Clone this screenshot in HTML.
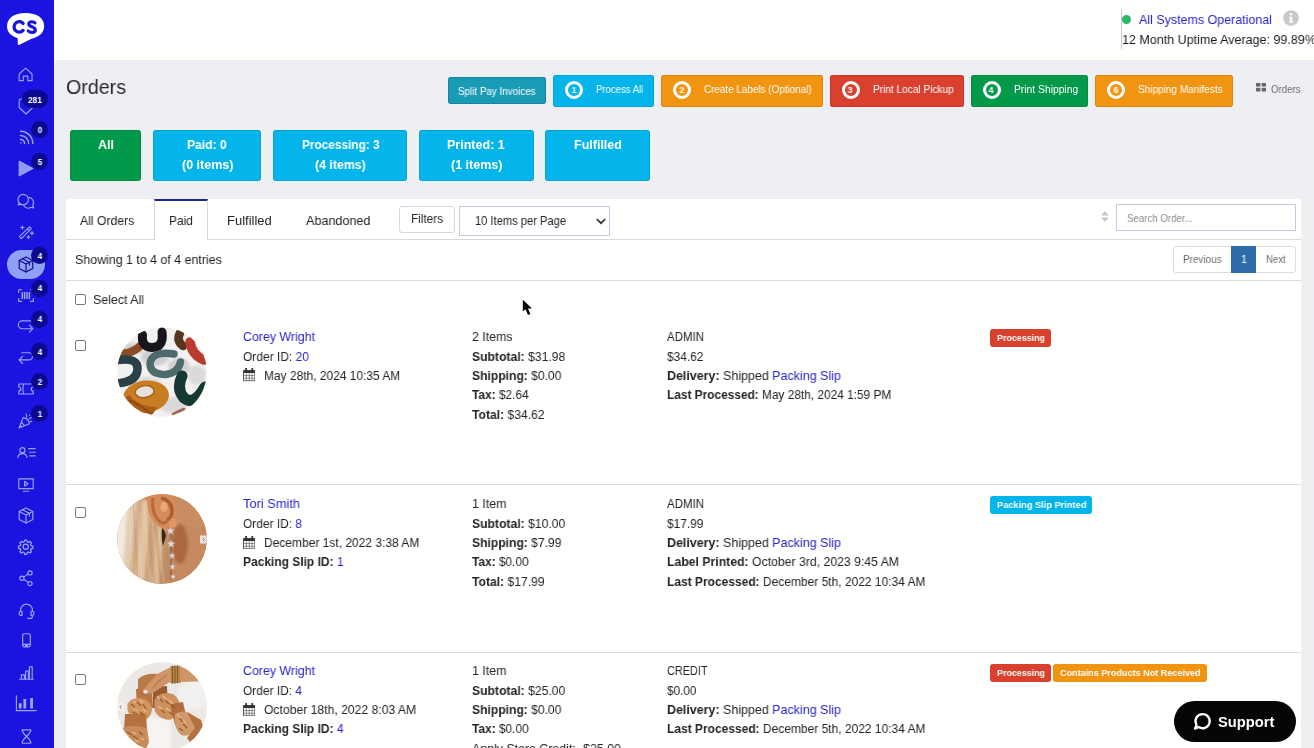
<!DOCTYPE html>
<html>
<head>
<meta charset="utf-8">
<title>Orders</title>
<style>
*{box-sizing:border-box;margin:0;padding:0}
html,body{width:1314px;height:748px;overflow:hidden;background:#fffffd}
body{font-family:"Liberation Sans",sans-serif;font-size:13px;color:#242424;position:relative}
a,.lk{color:#2b24d0;text-decoration:none}
.a{position:absolute}
#sidebar{position:absolute;left:0;top:0;width:54px;height:748px;background:#1b13e0}
#main{position:absolute;left:54.4px;top:60px;width:1260px;height:688px;background:#edeff3;border-top-left-radius:4px}
#panel{position:absolute;left:66px;top:199px;width:1234.5px;height:560px;background:#fffffd;border-radius:3px 3px 0 0}
.t{position:absolute;white-space:nowrap;will-change:transform}
.t b{font-weight:bold}
.hl{position:absolute;height:1px;background:#dbdbdb}
.btn{position:absolute;border-radius:2.2px}
.ring{position:absolute;width:18.6px;height:18.6px;border:3px solid #fff;border-radius:50%;top:4.9px;left:10.6px}
.card{position:absolute;top:130px;height:51px;border-radius:2.5px;background:#03b5ea;border:1px solid #04a3d6}
.cb{position:absolute;width:11px;height:11px;border:1px solid #767676;border-radius:2px;background:#fff}
.badge{position:absolute;height:18px;border-radius:3px}
.sb{position:absolute;background:#0b098f;border-radius:9px;height:17px}
.ic{position:absolute;overflow:visible}
.ic *{fill:none;stroke:#99a5f8;stroke-width:1.15;stroke-linecap:round;stroke-linejoin:round}
</style>
</head>
<body>
<div id="main"></div>
<div id="sidebar"></div>
<div id="panel"></div>

<svg class="a" style="left:5px;top:10px" width="42" height="38" viewBox="5 10 42 38"><path d="M25.55 12.9C37.02 12.9 44.1 17.88 44.1 26.0C44.1 34.12 37.02 39.1 25.55 39.1C14.08 39.1 7.0 34.12 7.0 26.0C7.0 17.88 14.08 12.9 25.55 12.9Z" fill="#fff"/><path d="M17.500 35L17.800 43.800Q17.900 45.400 19.500 44.700L33.500 37.800Z" fill="#fff"/><path d="M23.100 23.400A5.200 5.200 0 1 0 23.100 30.400" fill="none" stroke="#1b13e0" stroke-width="3.300" stroke-linecap="round"/><path d="M35 22.900C33.300 21.200 28.800 21.200 28.800 24C28.800 27.300 35.300 26.300 35.300 29.900C35.300 33 30.200 33 28.300 31" fill="none" stroke="#1b13e0" stroke-width="3.200" stroke-linecap="round"/></svg>
<div class="a" style="left:7px;top:249.5px;width:38px;height:29px;border-radius:14.5px;background:#8fa1f5"></div>
<!-- home -->
<svg class="ic" style="left:18.4px;top:67.3px" width="15.2" height="15.2" viewBox="0 0 16 16"><path d="M1.2 7.4L8 1.2L14.8 7.4V14.4H10.4V9.6H5.6V14.4H1.2Z"/></svg>
<!-- tag -->
<svg class="ic" style="left:18px;top:98px" width="16" height="17" viewBox="0 0 16 17"><path d="M1.2 2.5Q1.2 1 2.7 1H13.3Q14.8 1 14.8 2.5V9.5L8 16L1.2 9.5Z"/></svg>
<!-- rss -->
<svg class="ic" style="left:19px;top:130px" width="15" height="15" viewBox="0 0 15 15"><path d="M1.5 1.2A12.3 12.3 0 0 1 13.8 13.5M1.5 5.4A8.1 8.1 0 0 1 9.6 13.5M1.5 9.4A4.1 4.1 0 0 1 5.6 13.5" style="stroke-width:1.5"/><circle cx="2" cy="13" r=".8" style="fill:#99a5f8;stroke:none"/></svg>
<!-- play -->
<svg class="ic" style="left:18px;top:160px" width="16" height="17" viewBox="0 0 16 17"><path d="M1.2 1.2L14.8 8.5L1.2 15.8Z" style="fill:#8e9bf4;stroke:#99a5f8"/></svg>
<!-- chat -->
<svg class="ic" style="left:16px;top:192px" width="20" height="18" viewBox="16 192 20 18"><circle cx="23.200" cy="199.600" r="5.200"/><path d="M19.300 203.100L18 204.900L21.200 204.400"/><path d="M28.900 197.400A5.300 5.300 0 0 1 32.700 205.600L33.800 208L31 207.300A5.300 5.300 0 0 1 23.900 205.900"/></svg>
<!-- wand -->
<svg class="ic" style="left:18px;top:224px" width="16" height="16" viewBox="0 0 16 16"><path d="M1.500 12.700L11.400 2.800L13.300 4.700L3.400 14.600ZM9.300 4.900L11.200 6.800"/><path d="M4.400 1.900V5.100M2.800 3.500H6M14 7.500V10.700M12.400 9.100H15.600M10.400 11.800V14.400M9.100 13.100H11.700" style="stroke-width:1.200"/></svg>
<!-- box active -->
<svg class="ic" style="left:18px;top:256px" width="16" height="17" viewBox="0 0 16 17"><g style="stroke:#0b098f"><path d="M8 1L14.8 4.4V12.4L8 16L1.2 12.4V4.4Z" style="stroke:#0b098f"/><path d="M1.2 4.4L8 7.9L14.8 4.4M8 7.9V16M4.5 2.7L11.4 6.2V9" style="stroke:#0b098f"/></g></svg>
<!-- barcode -->
<svg class="ic" style="left:17.5px;top:288.5px" width="16" height="13" viewBox="0 0 16 13"><path d="M.7 3.4V.7H3.6M12.4 .7H15.3V3.4M15.3 9.6V12.3H12.4M3.6 12.3H.7V9.6"/><path d="M4.3 3.6V9.4M6.6 3.6V9.4M9 3.6V9.4M11.4 3.6V9.4" style="stroke-width:1.5"/></svg>
<!-- turn right -->
<svg class="ic" style="left:17px;top:318px" width="18" height="16" viewBox="17 318 18 16"><path d="M30.500 320.900H22.200A3.900 3.900 0 0 0 22.200 328.700H32.600M29.400 325.200L32.900 328.700L29.400 332.200"/></svg>
<!-- turn left -->
<svg class="ic" style="left:17px;top:350px" width="18" height="16" viewBox="17 350 18 16"><path d="M21.800 352.700H29A3.600 3.600 0 0 1 29 359.900H19.200M22.600 356.400L19 359.900L22.600 363.500"/></svg>
<!-- ticket -->
<svg class="ic" style="left:17.5px;top:382.8px" width="16" height="12" viewBox="0 0 16 12"><path d="M.8 1H15.2V4A2 2 0 0 0 15.2 8V11H.8V8A2 2 0 0 0 .8 4ZM5.4 1Q4.4 6 5.4 11"/></svg>
<!-- party -->
<svg class="ic" style="left:18px;top:412.5px" width="15" height="16" viewBox="0 0 15 16"><path d="M5.2 4.6L1 15L11.4 10.8A7.4 7.4 0 0 0 5.2 4.6ZM3.4 9.4L6.6 12.6M2.2 12.2L3.8 13.8"/><path d="M8.6 4.2Q9 2.4 8 1M11 6Q12.2 4.6 13.8 4.8M12.2 8.4L13.6 8.6M11.6 2.2L11.7 2.3" style="stroke-width:1.1"/></svg>
<!-- user list -->
<svg class="ic" style="left:17px;top:447px" width="19" height="11" viewBox="0 0 19 11"><circle cx="5.4" cy="3.2" r="2.6"/><path d="M.8 10.4A4.7 4.7 0 0 1 10 10.4M11.6 1.6H18.2M12.6 5.2H18.2M12.6 8.8H18.2"/></svg>
<!-- monitor -->
<svg class="ic" style="left:18px;top:477.5px" width="16" height="14" viewBox="0 0 16 14"><path d="M.8 .8H15.2V10.6H.8ZM5.4 13.2H10.6M6.6 3.4L10 5.7L6.6 8Z"/></svg>
<!-- box -->
<svg class="ic" style="left:17.5px;top:507px" width="16" height="17" viewBox="0 0 16 17"><path d="M8 1L14.8 4.4V12.4L8 16L1.2 12.4V4.4Z"/><path d="M1.2 4.4L8 7.9L14.8 4.4M8 7.9V16M4.5 2.7L11.4 6.2V9"/></svg>
<!-- gear -->
<svg class="ic" style="left:18.200px;top:538.800px" width="15.400" height="15.400" viewBox="0 0 24 24"><path d="M10.3 1.6h3.4l.6 2.9 1.9.8 2.5-1.6 2.4 2.4-1.6 2.5.8 1.9 2.9.6v3.4l-2.9.6-.8 1.9 1.6 2.5-2.4 2.4-2.5-1.6-1.9.8-.6 2.9h-3.4l-.6-2.9-1.9-.8-2.5 1.6-2.4-2.4 1.6-2.5-.8-1.9-2.9-.6v-3.4l2.9-.6.8-1.9-1.6-2.5 2.4-2.4 2.5 1.6 1.9-.8z" style="stroke-width:2"/><circle cx="12" cy="12" r="4" style="stroke-width:2"/></svg>
<!-- share -->
<svg class="ic" style="left:18.5px;top:570px" width="14" height="16.5" viewBox="0 0 14 16.5"><circle cx="11" cy="2.9" r="2.1"/><circle cx="2.9" cy="8.2" r="2.1"/><circle cx="11" cy="13.6" r="2.1"/><path d="M4.7 7.1L9.2 4M4.7 9.3L9.2 12.4"/></svg>
<!-- headset -->
<svg class="ic" style="left:17.5px;top:602.5px" width="17" height="16.5" viewBox="0 0 17 16.5"><path d="M2.6 8.4V7A5.9 5.9 0 0 1 14.4 7V8.4"/><path d="M4 8.2H2.8A1.6 1.6 0 0 0 1.2 9.8V10.8A1.6 1.6 0 0 0 2.8 12.4H4ZM13 8.2H14.2A1.6 1.6 0 0 1 15.8 9.8V10.8A1.6 1.6 0 0 1 14.2 12.4H13ZM14.4 12.4V13.4Q14.4 15.4 12.4 15.4H9.6"/></svg>
<!-- phone -->
<svg class="ic" style="left:21.5px;top:633px" width="9" height="14.5" viewBox="0 0 9 14.5"><path d="M2.2 .7H6.8Q8.3 .7 8.3 2.2V12.3Q8.3 13.8 6.8 13.8H2.2Q.7 13.8 .7 12.3V2.2Q.7 .7 2.2 .7ZM.7 11.4H8.3M3.6 12.6H5.4"/></svg>
<!-- bars -->
<svg class="ic" style="left:18.5px;top:665.5px" width="15" height="14" viewBox="0 0 15 14"><path d="M.6 13.2H14.4M2.4 13.2V8.8H5.4V13.2M6.6 13.2V5H9.4V13.2M10.4 13.2V.8H13.2V13.2"/></svg>
<!-- chart -->
<svg class="ic" style="left:15px;top:695px" width="22" height="16.5" viewBox="0 0 22 16.5"><path d="M1.4 .7V15.6H21.2"/><path d="M5.2 13.6V8.2M9.8 13.6V4M16.6 13.6V3" style="stroke-width:2.8;stroke-linecap:butt"/></svg>
<!-- hourglass -->
<svg class="ic" style="left:20.5px;top:728.5px" width="11" height="15" viewBox="0 0 11 15"><path d="M1.6 .8H9.4Q10.2 .8 9.8 1.8Q8.8 4.8 5.5 7.5Q2.2 4.8 1.2 1.8Q.8 .8 1.6 .8ZM1.6 14.2H9.4Q10.2 14.2 9.8 13.2Q8.8 10.2 5.5 7.5Q2.2 10.2 1.2 13.2Q.8 14.2 1.6 14.2Z"/></svg>
<!-- badges -->
<div class="sb" style="left:22.2px;top:90px;width:25.6px;height:18px"></div>
<div class="sb" style="left:31px;top:121px;width:17px"></div>
<div class="sb" style="left:31px;top:153px;width:17px"></div>
<div class="sb" style="left:31px;top:247.3px;width:17px"></div>
<div class="sb" style="left:31px;top:279.5px;width:17px"></div>
<div class="sb" style="left:31px;top:310.5px;width:17px"></div>
<div class="sb" style="left:31px;top:342.7px;width:17px"></div>
<div class="sb" style="left:31px;top:373.2px;width:17px"></div>
<div class="sb" style="left:31px;top:405.4px;width:17px"></div>

<div class="a" style="left:1121px;top:9px;width:1px;height:40px;background:#c9cce0"></div>
<div class="a" style="left:1121.6px;top:14.600px;width:9.800px;height:9.800px;border-radius:50%;background:#2db76b"></div>
<svg class="a" style="left:1283px;top:9.5px" width="16" height="16" viewBox="0 0 16 16"><circle cx="8" cy="8" r="7.8" fill="#c9c9c9"/><circle cx="8" cy="4.3" r="1.25" fill="#fff"/><path d="M6.3 6.7h2.9v4.6h1v1.2H6v-1.2h1V7.9H6.3z" fill="#fff"/></svg>

<div class="btn" style="left:448px;top:77px;width:98px;height:26.5px;background:#1a9bb5;border:1px solid #1b8399"></div>
<div class="btn" style="left:553px;top:75px;width:101px;height:31.5px;background:#03b5ea;border:1px solid #04a3d6"><div class="ring"></div></div>
<div class="btn" style="left:661px;top:75px;width:162px;height:31.5px;background:#f19412;border:1px solid #e0830f"><div class="ring"></div></div>
<div class="btn" style="left:830px;top:75px;width:134px;height:31.5px;background:#d9402e;border:1px solid #c93524"><div class="ring"></div></div>
<div class="btn" style="left:971px;top:75px;width:117px;height:31.5px;background:#029a4a;border:1px solid #028a40"><div class="ring"></div></div>
<div class="btn" style="left:1095px;top:75px;width:138px;height:31.5px;background:#f19412;border:1px solid #e0830f"><div class="ring"></div></div>
<svg class="a" style="left:1255.5px;top:83.3px" width="10" height="8.4" viewBox="0 0 10 8.4"><path d="M0 .6Q0 0 .6 0H3.8Q4.4 0 4.4 .6V3Q4.4 3.6 3.8 3.6H.6Q0 3.6 0 3zM5.6 .6Q5.6 0 6.2 0H9.4Q10 0 10 .6V3Q10 3.6 9.4 3.6H6.2Q5.6 3.6 5.6 3zM0 5.4Q0 4.8 .6 4.8H3.8Q4.4 4.8 4.4 5.4V7.8Q4.4 8.4 3.8 8.4H.6Q0 8.4 0 7.8zM5.6 5.4Q5.6 4.8 6.2 4.8H9.4Q10 4.8 10 5.4V7.8Q10 8.4 9.4 8.4H6.2Q5.6 8.4 5.6 7.8z" fill="#666"/></svg>

<div class="card" style="left:70px;width:71px;background:#029a4a;border-color:#028a40"></div>
<div class="card" style="left:153px;width:108px"></div>
<div class="card" style="left:273px;width:134px"></div>
<div class="card" style="left:419px;width:115px"></div>
<div class="card" style="left:545px;width:105px"></div>

<div class="hl" style="left:66px;top:238.5px;width:1234.5px;background:#d9d9db"></div>
<div class="a" style="left:154px;top:199px;width:54px;height:40.5px;background:#fffffd;border:1px solid #d9d9db;border-bottom:none;border-top:2px solid #1a2a8a"></div>
<div class="a" style="left:399px;top:206px;width:55.5px;height:26.5px;border:1px solid #d9d9d9;border-radius:3px;background:#fffffd"></div>
<div class="a" style="left:459px;top:206px;width:151px;height:29.5px;border:1px solid #c3c9e6;border-radius:0;background:#fffffd"></div>
<svg class="a" style="left:596px;top:218px" width="10" height="7" viewBox="0 0 10 7"><path d="M.8 1L5 5.200L9.200 1" fill="none" stroke="#333" stroke-width="1.700" stroke-linejoin="miter"/></svg>
<svg class="a" style="left:1100.5px;top:211px" width="8" height="11" viewBox="0 0 8 11"><path d="M4 0L7.8 4.4H.2zM4 11L7.8 6.6H.2z" fill="#c3c7d6"/></svg>
<div class="a" style="left:1116px;top:204px;width:180px;height:27px;border:1px solid #c3c9e6;border-radius:0;background:#fffffd"></div>
<div class="hl" style="left:66px;top:280px;width:1234.5px"></div>
<div class="a" style="left:1173px;top:246px;width:123px;height:27px;border:1px solid #dcdcdc;border-radius:3px;background:#fffffd"></div>
<div class="a" style="left:1231px;top:246px;width:25px;height:27px;background:#2d6dab"></div>
<div class="cb" style="left:75px;top:294px"></div>
<svg class="a" style="left:520px;top:298px" width="14" height="19" viewBox="520 298 14 19"><path d="M522.800 299.800V311.500L525.500 309.200L528 315L530.400 314L528 308.500H532Z" fill="#050505" stroke="#fff" stroke-width="1.200" stroke-linejoin="round" paint-order="stroke"/></svg>

<div class="hl" style="left:66px;top:484px;width:1234.5px"></div>
<div class="hl" style="left:66px;top:652px;width:1234.5px"></div>
<div class="cb" style="left:75px;top:340px"></div>
<div class="cb" style="left:75px;top:507px"></div>
<div class="cb" style="left:75px;top:674px"></div>
<svg width="0" height="0" style="position:absolute"><defs>
<clipPath id="cc"><circle cx="45" cy="45" r="44.8"/></clipPath>
<filter id="b1" x="-20%" y="-20%" width="140%" height="140%"><feGaussianBlur stdDeviation="0.7"/></filter>
<filter id="b2" x="-20%" y="-20%" width="140%" height="140%"><feGaussianBlur stdDeviation="1.6"/></filter>
<filter id="b3" x="-20%" y="-20%" width="140%" height="140%"><feGaussianBlur stdDeviation="3"/></filter>
<symbol id="cal" viewBox="0 0 13 14"><path d="M.5 2.600h12v10.900H.5z" fill="none" stroke="#333" stroke-width=".9"/><path d="M.5 7.900h12M.5 10.700h12M3.500 5.200v8.300M6.500 5.200v8.300M9.500 5.200v8.300" stroke="#333" stroke-width=".55" fill="none"/><path d="M.5 2.600h12v2.700H.5z" fill="#333"/><path d="M3.300.7v2.600M9.700.7v2.600" stroke="#333" stroke-width="1.900" stroke-linecap="round"/></symbol>
</defs></svg>
<svg class="a" style="left:243px;top:368.3px" width="12.4" height="13.4"><use href="#cal"/></svg>
<svg class="a" style="left:243px;top:535.5px" width="12.4" height="13.4"><use href="#cal"/></svg>
<svg class="a" style="left:243px;top:702.5px" width="12.4" height="13.4"><use href="#cal"/></svg>
<svg class="a" style="left:117.2px;top:327.2px" width="90" height="90" viewBox="0 0 90 90"><g clip-path="url(#cc)"><rect width="90" height="90" fill="#f3f1ef"/>
<g filter="url(#b2)"><ellipse cx="38" cy="30" rx="14" ry="9" fill="#cfcfd2"/><ellipse cx="62" cy="40" rx="11" ry="9" fill="#d0d0d4"/><ellipse cx="14" cy="22" rx="12" ry="6" fill="#d0cfd1"/><ellipse cx="56" cy="78" rx="14" ry="8" fill="#d9d8da"/><ellipse cx="30" cy="55" rx="14" ry="5" fill="#dcdbdc"/><ellipse cx="80" cy="48" rx="9" ry="10" fill="#dadadc"/></g>
<g filter="url(#b1)" fill="none" stroke-linecap="round">
<path d="M5 26.500Q15 27 25 17.500" stroke="#8b4b26" stroke-width="8"/>
<path d="M25.500 8Q24 20 35 20.500Q47 20.500 45 5" stroke="#15141d" stroke-width="9"/>
<path d="M63 6Q59 14 66 19" stroke="#54361c" stroke-width="8.500"/>
<path d="M73 15Q75 28 87 33" stroke="#b93b2d" stroke-width="9.500"/>
<path d="M57 27Q35 23.500 33 36.500Q33 47.500 49 47.500Q61 46 63.500 35" stroke="#4e6b6c" stroke-width="7.500"/>
<path d="M1 33Q21 30 20.500 42Q20 54 3 56" stroke="#2c4147" stroke-width="8.500"/>
<path d="M65 49Q59 62 67 71Q77 79 88 60" stroke="#183932" stroke-width="11"/>
<ellipse cx="29" cy="69.500" rx="23" ry="16" fill="#c97d20" stroke="none" transform="rotate(-6 29 69.500)"/>
<path d="M7 72Q14 86 36 87L40 80Q22 80 12 68Z" fill="#a95c17" stroke="none"/>
<path d="M12 73Q24 78 34 87" stroke="#8a4614" stroke-width="1.600"/>
<ellipse cx="27.600" cy="64.600" rx="9.500" ry="6" fill="#e6e1dc" stroke="#a8641c" stroke-width="1.500" transform="rotate(-8 27.600 64.600)"/>
<path d="M56 87Q62 84 67 82" stroke="#a4604a" stroke-width="2.500"/>
</g></g></svg>
<svg class="a" style="left:117.200px;top:494.300px" width="90" height="90" viewBox="0 0 90 90"><g clip-path="url(#cc)"><rect width="90" height="90" fill="#c48658"/>
<g filter="url(#b2)">
<rect x="56" y="0" width="40" height="34" fill="#c98d62"/>
<ellipse cx="74" cy="62" rx="22" ry="30" fill="#c68a60"/>
<ellipse cx="63" cy="50" rx="8" ry="20" fill="#ac683c"/>
<rect x="-4" y="0" width="14" height="90" fill="#f3ebe2"/>
<rect x="8" y="0" width="9" height="90" fill="#e3ccb2" transform="rotate(4 13 45)"/>
<rect x="16" y="0" width="7" height="90" fill="#cfa985" transform="rotate(5 20 45)"/>
<rect x="22" y="6" width="9" height="90" fill="#e2c4a2" transform="rotate(5 27 45)"/>
<rect x="30.500" y="20" width="7" height="80" fill="#c9a07a" transform="rotate(5 35 55)"/>
<rect x="37" y="30" width="8" height="70" fill="#d9b590" transform="rotate(5 42 60)"/>
<rect x="45" y="42" width="6" height="60" fill="#bd9068" transform="rotate(4 49 65)"/>
</g>
<g stroke-width=".6" fill="none" opacity=".55"><path d="M12 10Q14 50 16 88M20 6Q23 50 25 90M27 12Q30 52 33 90M35 26Q38 60 41 90M42 36Q44 64 47 90" stroke="#f1e2cf"/><path d="M16 8Q19 50 21 90M31 18Q34 56 37 90M39 32Q41 62 44 90" stroke="#a97f58"/></g>
<g filter="url(#b1)">
<path d="M30 2Q29 22 40 31Q48 38 55 33Q62 28 60 14Q58 2 50 -2H32Z" fill="#d78b59"/>
<path d="M36 4Q34 18 42 27Q47 31 50 27" fill="none" stroke="#b56a3d" stroke-width="3"/>
<path d="M44 4Q54 6 55 16Q55 24 50 26" fill="none" stroke="#a95f35" stroke-width="3.500"/>
<ellipse cx="47" cy="13" rx="3.500" ry="5" fill="#e9a677"/>
<ellipse cx="56" cy="29" rx="4" ry="4.500" fill="#dd9566"/>
<path d="M45 34Q48 36 49 42L46 52Q44 44 45 34Z" fill="#3b2619"/>
<path d="M54 34V86" stroke="#8a6248" stroke-width="1.200"/>
</g>
<g filter="url(#b1)" fill="#ddd2d4" stroke="#a58570" stroke-width=".4">
<path transform="translate(53.500 36.500) scale(.8)" d="M0-5l1.600 3.400 3.800.4-2.800 2.600.8 3.800-3.400-2-3.400 2 .8-3.800-2.800-2.600 3.800-.4z"/>
<path transform="translate(54 49.500) scale(.8)" d="M0-5l1.600 3.400 3.800.4-2.800 2.600.8 3.800-3.400-2-3.400 2 .8-3.800-2.800-2.600 3.800-.4z"/>
<path transform="translate(55 61.500) scale(.62)" d="M0-5l1.600 3.400 3.800.4-2.800 2.600.8 3.800-3.400-2-3.400 2 .8-3.800-2.800-2.600 3.800-.4z"/>
<path transform="translate(55.500 72.500) scale(.62)" d="M0-5l1.600 3.400 3.800.4-2.800 2.600.8 3.800-3.400-2-3.400 2 .8-3.800-2.800-2.600 3.800-.4z"/>
<path transform="translate(56 82.500) scale(.55)" d="M0-5l1.600 3.400 3.800.4-2.800 2.600.8 3.800-3.400-2-3.400 2 .8-3.800-2.800-2.600 3.800-.4z"/>
</g>
<rect x="83" y="41.500" width="7" height="8" fill="#ebe1da"/><path d="M85.800 43.800L87.500 45.500L85.800 47.200" fill="none" stroke="#777" stroke-width=".8"/>
</g></svg>
<svg class="a" style="left:117.400px;top:661.800px" width="90" height="90" viewBox="0 0 90 90"><g clip-path="url(#cc)"><rect width="90" height="90" fill="#ebe8e6"/>
<g filter="url(#b2)"><ellipse cx="76" cy="34" rx="16" ry="14" fill="#f3f1f0"/><path d="M31 55L53 58L54 92H28Z" fill="#f6f4f2"/></g>
<g filter="url(#b1)">
<path d="M21 17Q28 11 40 12L44 26L34 30L21 27Z" fill="#b97a4a"/>
<path d="M19 27L35 26L36 46L20 45Z" fill="#b87443"/>
<path d="M36 25L50 24L51 46L36 46Z" fill="#9a5a32"/>
<ellipse cx="43.500" cy="45" rx="3.500" ry="3" fill="#5f3422"/>
<path d="M90 5L63 4L54 5L40 12L26 28L27 31.500L35 31.500L52 20.500L63 20L90 19Z" fill="#cf9468"/>
<path d="M50 13Q42 18 36 26" fill="none" stroke="#bb8258" stroke-width="1.500"/>
<path d="M53.500 4L63 3.500L63.500 21L54 21.500Z" fill="#b8864a"/><path d="M55.500 4V21.500M58 3.800V21.300M60.500 3.600V21" stroke="#7e5428" stroke-width="1"/>
<path d="M10.500 42Q14 35 24 36Q34 38 35 48Q34 58 24 58Q12 56 10.500 48Z" fill="#d1965f"/>
<path d="M37.500 38Q42 30 52 31Q62 33 63 44Q62 56 52 58Q40 56 37.500 48Z" fill="#cd915d"/>
<path d="M53 42L66 40L70 58L58 63Z" fill="#b06c3c"/>
<path d="M58 52Q66 47 74 52L79 66Q74 76 64 73Q56 66 58 52Z" fill="#d09a68"/>
<path d="M70 50L84 58L88 72L76 84L70 76L78 66Z" fill="#b4703d"/>
<path d="M8 52L29 52L30 68L7 68Z" fill="#b5713f"/>
<path d="M5 66Q16 62 30 66L32 80L27 92H8Q2 80 5 66Z" fill="#c98d5c"/>
<path d="M14 42l4 3M20 40l4 4M26 42l3 5M15 50l5 2M23 50l4 3M42 36l4 4M48 38l4 4M54 42l4 4M44 48l4 3M52 50l4 3M62 56l4 4M66 62l4 4M62 66l4 3M10 70l5 3M16 74l5 3M12 80l5 3M22 70l4 3M20 82l4 3" stroke="#96582f" stroke-width="1.200" fill="none"/>
<path d="M16 39l3 2M23 38l3 3M17 47l4 2M26 47l3 3M40 34l3 3M46 34l4 4M52 38l4 4M41 44l4 3M49 46l4 3M60 52l4 4M66 58l3 3M8 72l4 2M15 70l4 2M18 78l4 2M24 76l3 2" stroke="#e8b98e" stroke-width="1.300" fill="none"/>
<ellipse cx="28.500" cy="29.800" rx="2.200" ry="1.700" fill="#f4ebe4"/>
</g>
<rect x="0" y="41" width="7.500" height="8" fill="#f4f1ee"/><path d="M4.300 43.300L2.800 45L4.300 46.700" fill="none" stroke="#666" stroke-width=".8"/>
</g></svg>
<div class="badge" style="left:989.5px;top:329px;width:61.5px;background:#d9402e"></div>
<div class="badge" style="left:989.5px;top:496px;width:102.5px;background:#03b5ea"></div>
<div class="badge" style="left:989.5px;top:664px;width:61.5px;background:#d9402e"></div>
<div class="badge" style="left:1052.5px;top:664px;width:154.5px;background:#f19412"></div>

<div class="a" style="left:1174px;top:701px;width:121.7px;height:41px;border-radius:20.5px;background:#050505"></div>
<svg class="a" style="left:1193.3px;top:712.4px" width="19" height="20" viewBox="0 0 19 20"><path d="M9.7 2.2a7 7 0 1 1-3.9 12.8L2 16.6l1.5-3.8A7 7 0 0 1 9.7 2.2z" fill="none" stroke="#fff" stroke-width="2.3" stroke-linejoin="round"/></svg>

<div class="t" style="left:66.00px;top:76.70px;font-size:20.5px;line-height:20px;height:20px;color:#2a2a2a;transform:scaleX(0.9576);transform-origin:0 50%;">Orders</div>
<div class="t" style="left:1138.60px;top:10.12px;font-size:13.5px;line-height:20px;height:20px;color:#2b24d0;transform:scaleX(0.9232);transform-origin:0 50%;">All Systems Operational</div>
<div class="t" style="left:1121.80px;top:30.42px;font-size:13.5px;line-height:20px;height:20px;color:#1c1c1c;transform:scaleX(0.9276);transform-origin:0 50%;">12 Month Uptime Average: 99.89%</div>
<div class="t" style="left:458.40px;top:81.53px;font-size:10.3px;line-height:20px;height:20px;color:#fff;transform:scaleX(0.9547);transform-origin:0 50%;">Split Pay Invoices</div>
<div class="t" style="left:596.30px;top:80.03px;font-size:10.3px;line-height:20px;height:20px;color:#fff;transform:scaleX(0.9286);transform-origin:0 50%;">Process All</div>
<div class="t" style="left:704.40px;top:80.03px;font-size:10.3px;line-height:20px;height:20px;color:#fff;transform:scaleX(0.9591);transform-origin:0 50%;">Create Labels (Optional)</div>
<div class="t" style="left:872.60px;top:80.03px;font-size:10.3px;line-height:20px;height:20px;color:#fff;transform:scaleX(0.9791);transform-origin:0 50%;">Print Local Pickup</div>
<div class="t" style="left:1013.70px;top:80.03px;font-size:10.3px;line-height:20px;height:20px;color:#fff;transform:scaleX(0.9983);transform-origin:0 50%;">Print Shipping</div>
<div class="t" style="left:1138.30px;top:80.03px;font-size:10.3px;line-height:20px;height:20px;color:#fff;transform:scaleX(0.9734);transform-origin:0 50%;">Shipping Manifests</div>
<div class="t" style="left:573.90px;top:80.38px;font-size:9px;line-height:20px;height:20px;transform:translateX(-50%) scaleX(.998);color:#fff;font-weight:bold;">1</div>
<div class="t" style="left:681.80px;top:80.38px;font-size:9px;line-height:20px;height:20px;transform:translateX(-50%) scaleX(.998);color:#fff;font-weight:bold;">2</div>
<div class="t" style="left:850.40px;top:80.38px;font-size:9px;line-height:20px;height:20px;transform:translateX(-50%) scaleX(.998);color:#fff;font-weight:bold;">3</div>
<div class="t" style="left:991.30px;top:80.38px;font-size:9px;line-height:20px;height:20px;transform:translateX(-50%) scaleX(.998);color:#fff;font-weight:bold;">4</div>
<div class="t" style="left:1115.90px;top:80.38px;font-size:9px;line-height:20px;height:20px;transform:translateX(-50%) scaleX(.998);color:#fff;font-weight:bold;">6</div>
<div class="t" style="left:1270.80px;top:79.63px;font-size:10.3px;line-height:20px;height:20px;color:#6d6d6d;transform:scaleX(0.9338);transform-origin:0 50%;">Orders</div>
<div class="t" style="left:105.60px;top:135.27px;font-size:12.5px;line-height:20px;height:20px;transform:translateX(-50%) scaleX(.998);color:#fff;font-weight:bold;">All</div>
<div class="t" style="left:187.40px;top:135.27px;font-size:12.5px;line-height:20px;height:20px;color:#fff;font-weight:bold;transform:scaleX(0.9683);transform-origin:0 50%;">Paid: 0</div>
<div class="t" style="left:181.90px;top:155.27px;font-size:12.5px;line-height:20px;height:20px;color:#fff;font-weight:bold;transform:scaleX(0.9979);transform-origin:0 50%;">(0 items)</div>
<div class="t" style="left:301.60px;top:135.27px;font-size:12.5px;line-height:20px;height:20px;color:#fff;font-weight:bold;transform:scaleX(0.9465);transform-origin:0 50%;">Processing: 3</div>
<div class="t" style="left:314.80px;top:155.27px;font-size:12.5px;line-height:20px;height:20px;color:#fff;font-weight:bold;transform:scaleX(0.9863);transform-origin:0 50%;">(4 items)</div>
<div class="t" style="left:447.10px;top:135.27px;font-size:12.5px;line-height:20px;height:20px;color:#fff;font-weight:bold;transform:scaleX(1.0025);transform-origin:0 50%;">Printed: 1</div>
<div class="t" style="left:450.70px;top:155.27px;font-size:12.5px;line-height:20px;height:20px;color:#fff;font-weight:bold;transform:scaleX(0.9960);transform-origin:0 50%;">(1 items)</div>
<div class="t" style="left:573.70px;top:135.27px;font-size:12.5px;line-height:20px;height:20px;color:#fff;font-weight:bold;transform:scaleX(0.9954);transform-origin:0 50%;">Fulfilled</div>
<div class="t" style="left:80.20px;top:211.30px;font-size:13px;line-height:20px;height:20px;transform:scaleX(0.9395);transform-origin:0 50%;">All Orders</div>
<div class="t" style="left:168.90px;top:211.30px;font-size:13px;line-height:20px;height:20px;transform:scaleX(0.9143);transform-origin:0 50%;">Paid</div>
<div class="t" style="left:227.10px;top:211.30px;font-size:13px;line-height:20px;height:20px;transform:scaleX(0.9889);transform-origin:0 50%;">Fulfilled</div>
<div class="t" style="left:306.00px;top:211.30px;font-size:13px;line-height:20px;height:20px;transform:scaleX(0.9697);transform-origin:0 50%;">Abandoned</div>
<div class="t" style="left:411.20px;top:208.90px;font-size:13px;line-height:20px;height:20px;transform:scaleX(0.9042);transform-origin:0 50%;">Filters</div>
<div class="t" style="left:474.50px;top:211.14px;font-size:12.3px;line-height:20px;height:20px;transform:scaleX(0.9056);transform-origin:0 50%;">10 Items per Page</div>
<div class="t" style="left:1126.60px;top:207.79px;font-size:11px;line-height:20px;height:20px;color:#8c8c8c;transform:scaleX(0.8808);transform-origin:0 50%;">Search Order...</div>
<div class="t" style="left:75.10px;top:250.30px;font-size:13px;line-height:20px;height:20px;transform:scaleX(0.9536);transform-origin:0 50%;">Showing 1 to 4 of 4 entries</div>
<div class="t" style="left:1183.30px;top:249.83px;font-size:10.3px;line-height:20px;height:20px;color:#6a6a6a;transform:scaleX(0.9610);transform-origin:0 50%;">Previous</div>
<div class="t" style="left:1243.50px;top:249.83px;font-size:10.3px;line-height:20px;height:20px;transform:translateX(-50%) scaleX(.998);color:#fff;">1</div>
<div class="t" style="left:1266.00px;top:249.83px;font-size:10.3px;line-height:20px;height:20px;color:#6a6a6a;transform:scaleX(0.9251);transform-origin:0 50%;">Next</div>
<div class="t" style="left:92.60px;top:290.30px;font-size:13px;line-height:20px;height:20px;transform:scaleX(0.9535);transform-origin:0 50%;">Select All</div>
<div class="t" style="left:243.10px;top:327.10px;font-size:13px;line-height:20px;height:20px;color:#2b24d0;transform:scaleX(0.9521);transform-origin:0 50%;">Corey Wright</div>
<div class="t" style="left:243.10px;top:346.70px;font-size:13px;line-height:20px;height:20px;transform:scaleX(0.9225);transform-origin:0 50%;">Order ID: <span class="lk">20</span></div>
<div class="t" style="left:263.80px;top:366.10px;font-size:13px;line-height:20px;height:20px;transform:scaleX(0.9193);transform-origin:0 50%;">May 28th, 2024 10:35 AM</div>
<div class="t" style="left:472.00px;top:327.10px;font-size:13px;line-height:20px;height:20px;transform:scaleX(0.9525);transform-origin:0 50%;">2 Items</div>
<div class="t" style="left:472.00px;top:346.70px;font-size:13px;line-height:20px;height:20px;transform:scaleX(0.9348);transform-origin:0 50%;"><b>Subtotal:</b> $31.98</div>
<div class="t" style="left:472.00px;top:366.10px;font-size:13px;line-height:20px;height:20px;transform:scaleX(0.9314);transform-origin:0 50%;"><b>Shipping:</b> $0.00</div>
<div class="t" style="left:472.00px;top:384.90px;font-size:13px;line-height:20px;height:20px;transform:scaleX(0.9141);transform-origin:0 50%;"><b>Tax:</b> $2.64</div>
<div class="t" style="left:472.00px;top:404.70px;font-size:13px;line-height:20px;height:20px;transform:scaleX(0.9332);transform-origin:0 50%;"><b>Total:</b> $34.62</div>
<div class="t" style="left:666.70px;top:327.10px;font-size:13px;line-height:20px;height:20px;transform:scaleX(0.8833);transform-origin:0 50%;">ADMIN</div>
<div class="t" style="left:666.70px;top:346.70px;font-size:13px;line-height:20px;height:20px;transform:scaleX(0.9154);transform-origin:0 50%;">$34.62</div>
<div class="t" style="left:666.70px;top:366.10px;font-size:13px;line-height:20px;height:20px;transform:scaleX(0.9581);transform-origin:0 50%;"><b>Delivery:</b> Shipped <span class="lk">Packing Slip</span></div>
<div class="t" style="left:666.70px;top:384.90px;font-size:13px;line-height:20px;height:20px;transform:scaleX(0.9129);transform-origin:0 50%;"><b>Last Processed:</b> May 28th, 2024 1:59 PM</div>
<div class="t" style="left:243.10px;top:494.20px;font-size:13px;line-height:20px;height:20px;color:#2b24d0;transform:scaleX(0.9879);transform-origin:0 50%;">Tori Smith</div>
<div class="t" style="left:243.10px;top:513.80px;font-size:13px;line-height:20px;height:20px;transform:scaleX(0.9174);transform-origin:0 50%;">Order ID: <span class="lk">8</span></div>
<div class="t" style="left:263.80px;top:533.20px;font-size:13px;line-height:20px;height:20px;transform:scaleX(0.9229);transform-origin:0 50%;">December 1st, 2022 3:38 AM</div>
<div class="t" style="left:243.10px;top:552.00px;font-size:13px;line-height:20px;height:20px;transform:scaleX(0.9211);transform-origin:0 50%;"><b>Packing Slip ID:</b> <span class="lk">1</span></div>
<div class="t" style="left:472.00px;top:494.20px;font-size:13px;line-height:20px;height:20px;transform:scaleX(0.9550);transform-origin:0 50%;">1 Item</div>
<div class="t" style="left:472.00px;top:513.80px;font-size:13px;line-height:20px;height:20px;transform:scaleX(0.9348);transform-origin:0 50%;"><b>Subtotal:</b> $10.00</div>
<div class="t" style="left:472.00px;top:533.20px;font-size:13px;line-height:20px;height:20px;transform:scaleX(0.9314);transform-origin:0 50%;"><b>Shipping:</b> $7.99</div>
<div class="t" style="left:472.00px;top:552.00px;font-size:13px;line-height:20px;height:20px;transform:scaleX(0.9141);transform-origin:0 50%;"><b>Tax:</b> $0.00</div>
<div class="t" style="left:472.00px;top:571.80px;font-size:13px;line-height:20px;height:20px;transform:scaleX(0.9332);transform-origin:0 50%;"><b>Total:</b> $17.99</div>
<div class="t" style="left:666.70px;top:494.20px;font-size:13px;line-height:20px;height:20px;transform:scaleX(0.8833);transform-origin:0 50%;">ADMIN</div>
<div class="t" style="left:666.70px;top:513.80px;font-size:13px;line-height:20px;height:20px;transform:scaleX(0.9154);transform-origin:0 50%;">$17.99</div>
<div class="t" style="left:666.70px;top:533.20px;font-size:13px;line-height:20px;height:20px;transform:scaleX(0.9581);transform-origin:0 50%;"><b>Delivery:</b> Shipped <span class="lk">Packing Slip</span></div>
<div class="t" style="left:666.70px;top:552.00px;font-size:13px;line-height:20px;height:20px;transform:scaleX(0.9415);transform-origin:0 50%;"><b>Label Printed:</b> October 3rd, 2023 9:45 AM</div>
<div class="t" style="left:666.70px;top:571.80px;font-size:13px;line-height:20px;height:20px;transform:scaleX(0.9219);transform-origin:0 50%;"><b>Last Processed:</b> December 5th, 2022 10:34 AM</div>
<div class="t" style="left:243.10px;top:661.40px;font-size:13px;line-height:20px;height:20px;color:#2b24d0;transform:scaleX(0.9521);transform-origin:0 50%;">Corey Wright</div>
<div class="t" style="left:243.10px;top:681.00px;font-size:13px;line-height:20px;height:20px;transform:scaleX(0.9174);transform-origin:0 50%;">Order ID: <span class="lk">4</span></div>
<div class="t" style="left:263.80px;top:700.40px;font-size:13px;line-height:20px;height:20px;transform:scaleX(0.9360);transform-origin:0 50%;">October 18th, 2022 8:03 AM</div>
<div class="t" style="left:243.10px;top:719.20px;font-size:13px;line-height:20px;height:20px;transform:scaleX(0.9211);transform-origin:0 50%;"><b>Packing Slip ID:</b> <span class="lk">4</span></div>
<div class="t" style="left:472.00px;top:661.40px;font-size:13px;line-height:20px;height:20px;transform:scaleX(0.9550);transform-origin:0 50%;">1 Item</div>
<div class="t" style="left:472.00px;top:681.00px;font-size:13px;line-height:20px;height:20px;transform:scaleX(0.9348);transform-origin:0 50%;"><b>Subtotal:</b> $25.00</div>
<div class="t" style="left:472.00px;top:700.40px;font-size:13px;line-height:20px;height:20px;transform:scaleX(0.9314);transform-origin:0 50%;"><b>Shipping:</b> $0.00</div>
<div class="t" style="left:472.00px;top:719.20px;font-size:13px;line-height:20px;height:20px;transform:scaleX(0.9141);transform-origin:0 50%;"><b>Tax:</b> $0.00</div>
<div class="t" style="left:666.70px;top:661.40px;font-size:13px;line-height:20px;height:20px;transform:scaleX(0.8369);transform-origin:0 50%;">CREDIT</div>
<div class="t" style="left:666.70px;top:681.00px;font-size:13px;line-height:20px;height:20px;transform:scaleX(0.9064);transform-origin:0 50%;">$0.00</div>
<div class="t" style="left:666.70px;top:700.40px;font-size:13px;line-height:20px;height:20px;transform:scaleX(0.9581);transform-origin:0 50%;"><b>Delivery:</b> Shipped <span class="lk">Packing Slip</span></div>
<div class="t" style="left:666.70px;top:719.20px;font-size:13px;line-height:20px;height:20px;transform:scaleX(0.9219);transform-origin:0 50%;"><b>Last Processed:</b> December 5th, 2022 10:34 AM</div>
<div class="t" style="left:472.00px;top:738.90px;font-size:13px;line-height:20px;height:20px;transform:scaleX(0.9502);transform-origin:0 50%;">Apply Store Credit: -$25.00</div>
<div class="t" style="left:996.60px;top:328.47px;font-size:9.6px;line-height:20px;height:20px;color:#fff;font-weight:bold;transform:scaleX(0.9278);transform-origin:0 50%;">Processing</div>
<div class="t" style="left:996.60px;top:495.47px;font-size:9.6px;line-height:20px;height:20px;color:#fff;font-weight:bold;transform:scaleX(0.9637);transform-origin:0 50%;">Packing Slip Printed</div>
<div class="t" style="left:996.60px;top:663.47px;font-size:9.6px;line-height:20px;height:20px;color:#fff;font-weight:bold;transform:scaleX(0.9278);transform-origin:0 50%;">Processing</div>
<div class="t" style="left:1059.80px;top:663.47px;font-size:9.6px;line-height:20px;height:20px;color:#fff;font-weight:bold;transform:scaleX(0.9446);transform-origin:0 50%;">Contains Products Not Received</div>
<div class="t" style="left:1218.40px;top:712.45px;font-size:14px;line-height:20px;height:20px;color:#fff;font-weight:bold;transform:scaleX(1.0511);transform-origin:0 50%;">Support</div>
<div class="t" style="left:35.00px;top:89.52px;font-size:8.3px;line-height:20px;height:20px;transform:translateX(-50%) scaleX(.998);color:#fff;font-weight:bold;">281</div>
<div class="t" style="left:39.50px;top:119.98px;font-size:9px;line-height:20px;height:20px;transform:translateX(-50%) scaleX(0.8990);color:#fff;font-weight:bold;">0</div>
<div class="t" style="left:39.50px;top:151.98px;font-size:9px;line-height:20px;height:20px;transform:translateX(-50%) scaleX(0.8990);color:#fff;font-weight:bold;">5</div>
<div class="t" style="left:39.50px;top:245.98px;font-size:9px;line-height:20px;height:20px;transform:translateX(-50%) scaleX(0.8990);color:#fff;font-weight:bold;">4</div>
<div class="t" style="left:39.50px;top:278.38px;font-size:9px;line-height:20px;height:20px;transform:translateX(-50%) scaleX(0.8990);color:#fff;font-weight:bold;">4</div>
<div class="t" style="left:39.50px;top:309.38px;font-size:9px;line-height:20px;height:20px;transform:translateX(-50%) scaleX(0.8990);color:#fff;font-weight:bold;">4</div>
<div class="t" style="left:39.50px;top:341.58px;font-size:9px;line-height:20px;height:20px;transform:translateX(-50%) scaleX(0.8990);color:#fff;font-weight:bold;">4</div>
<div class="t" style="left:39.50px;top:372.08px;font-size:9px;line-height:20px;height:20px;transform:translateX(-50%) scaleX(0.8990);color:#fff;font-weight:bold;">2</div>
<div class="t" style="left:39.50px;top:404.28px;font-size:9px;line-height:20px;height:20px;transform:translateX(-50%) scaleX(0.8990);color:#fff;font-weight:bold;">1</div>
</body>
</html>
